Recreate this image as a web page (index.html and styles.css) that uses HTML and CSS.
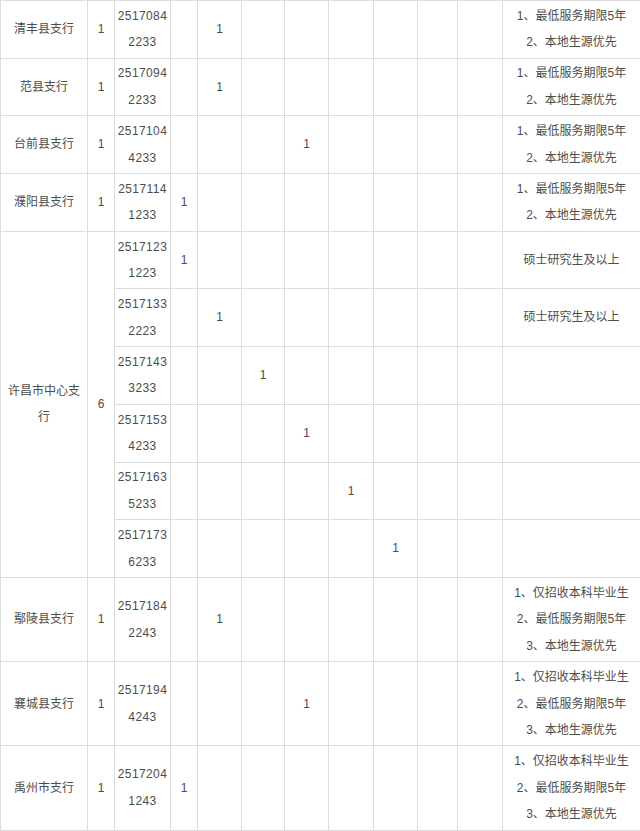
FILE: index.html
```html
<!DOCTYPE html>
<html lang="zh-CN">
<head>
<meta charset="utf-8">
<title>招聘岗位表</title>
<link rel="stylesheet" href="styles.css">
</head>
<body>
<table class="jobs">
  <colgroup>
    <col class="c-name"><col class="c-total"><col class="c-code">
    <col class="c-a"><col class="c-b"><col class="c-c"><col class="c-d"><col class="c-e"><col class="c-f">
    <col class="c-g"><col class="c-h"><col class="c-note">
  </colgroup>
  <tbody>
    <tr>
      <td class="name">清丰县支行</td><td>1</td><td class="code">2517084<br>2233</td>
      <td></td><td>1</td><td></td><td></td><td></td><td></td><td></td><td></td>
      <td class="note">1、最低服务期限5年<br>2、本地生源优先</td>
    </tr>
    <tr>
      <td class="name">范县支行</td><td>1</td><td class="code">2517094<br>2233</td>
      <td></td><td>1</td><td></td><td></td><td></td><td></td><td></td><td></td>
      <td class="note">1、最低服务期限5年<br>2、本地生源优先</td>
    </tr>
    <tr>
      <td class="name">台前县支行</td><td>1</td><td class="code">2517104<br>4233</td>
      <td></td><td></td><td></td><td>1</td><td></td><td></td><td></td><td></td>
      <td class="note">1、最低服务期限5年<br>2、本地生源优先</td>
    </tr>
    <tr>
      <td class="name">濮阳县支行</td><td>1</td><td class="code">2517114<br>1233</td>
      <td>1</td><td></td><td></td><td></td><td></td><td></td><td></td><td></td>
      <td class="note">1、最低服务期限5年<br>2、本地生源优先</td>
    </tr>
    <tr>
      <td class="name" rowspan="6">许昌市中心支行</td><td rowspan="6">6</td><td class="code">2517123<br>1223</td>
      <td>1</td><td></td><td></td><td></td><td></td><td></td><td></td><td></td>
      <td class="note">硕士研究生及以上</td>
    </tr>
    <tr>
      <td class="code">2517133<br>2223</td>
      <td></td><td>1</td><td></td><td></td><td></td><td></td><td></td><td></td>
      <td class="note">硕士研究生及以上</td>
    </tr>
    <tr>
      <td class="code">2517143<br>3233</td>
      <td></td><td></td><td>1</td><td></td><td></td><td></td><td></td><td></td>
      <td class="note"></td>
    </tr>
    <tr>
      <td class="code">2517153<br>4233</td>
      <td></td><td></td><td></td><td>1</td><td></td><td></td><td></td><td></td>
      <td class="note"></td>
    </tr>
    <tr>
      <td class="code">2517163<br>5233</td>
      <td></td><td></td><td></td><td></td><td>1</td><td></td><td></td><td></td>
      <td class="note"></td>
    </tr>
    <tr>
      <td class="code">2517173<br>6233</td>
      <td></td><td></td><td></td><td></td><td></td><td>1</td><td></td><td></td>
      <td class="note"></td>
    </tr>
    <tr>
      <td class="name">鄢陵县支行</td><td>1</td><td class="code">2517184<br>2243</td>
      <td></td><td>1</td><td></td><td></td><td></td><td></td><td></td><td></td>
      <td class="note">1、仅招收本科毕业生<br>2、最低服务期限5年<br>3、本地生源优先</td>
    </tr>
    <tr>
      <td class="name">襄城县支行</td><td>1</td><td class="code">2517194<br>4243</td>
      <td></td><td></td><td></td><td>1</td><td></td><td></td><td></td><td></td>
      <td class="note">1、仅招收本科毕业生<br>2、最低服务期限5年<br>3、本地生源优先</td>
    </tr>
    <tr>
      <td class="name">禹州市支行</td><td>1</td><td class="code">2517204<br>1243</td>
      <td>1</td><td></td><td></td><td></td><td></td><td></td><td></td><td></td>
      <td class="note">1、仅招收本科毕业生<br>2、最低服务期限5年<br>3、本地生源优先</td>
    </tr>
  </tbody>
</table>
</body>
</html>
```

FILE: styles.css
```css
html, body {
  margin: 0;
  padding: 0;
  background: #ffffff;
  overflow: hidden;
}

.jobs {
  border-collapse: collapse;
  table-layout: fixed;
  width: 642px;
  font-family: "Liberation Sans", "Noto Sans CJK SC", sans-serif;
  font-size: 12px;
  color: #4d4d4d;
}

.jobs td {
  border: 1px solid #dddddd;
  padding: 1.75px 6px;
  line-height: 26.6px;
  text-align: center;
  vertical-align: middle;
}

.jobs td.code {
  padding: 1.75px 0;
  white-space: nowrap;
  letter-spacing: 0.4px;
}

.jobs td.note {
  padding: 1.75px 2px 1.75px 0;
  white-space: nowrap;
}

.c-name { width: 87px; }
.c-total { width: 27px; }
.c-code { width: 56px; }
.c-a { width: 27px; }
.c-b { width: 44px; }
.c-c { width: 43px; }
.c-d { width: 44px; }
.c-e { width: 45px; }
.c-f { width: 44px; }
.c-g { width: 40px; }
.c-h { width: 45px; }
.c-note { width: 140px; }
```
